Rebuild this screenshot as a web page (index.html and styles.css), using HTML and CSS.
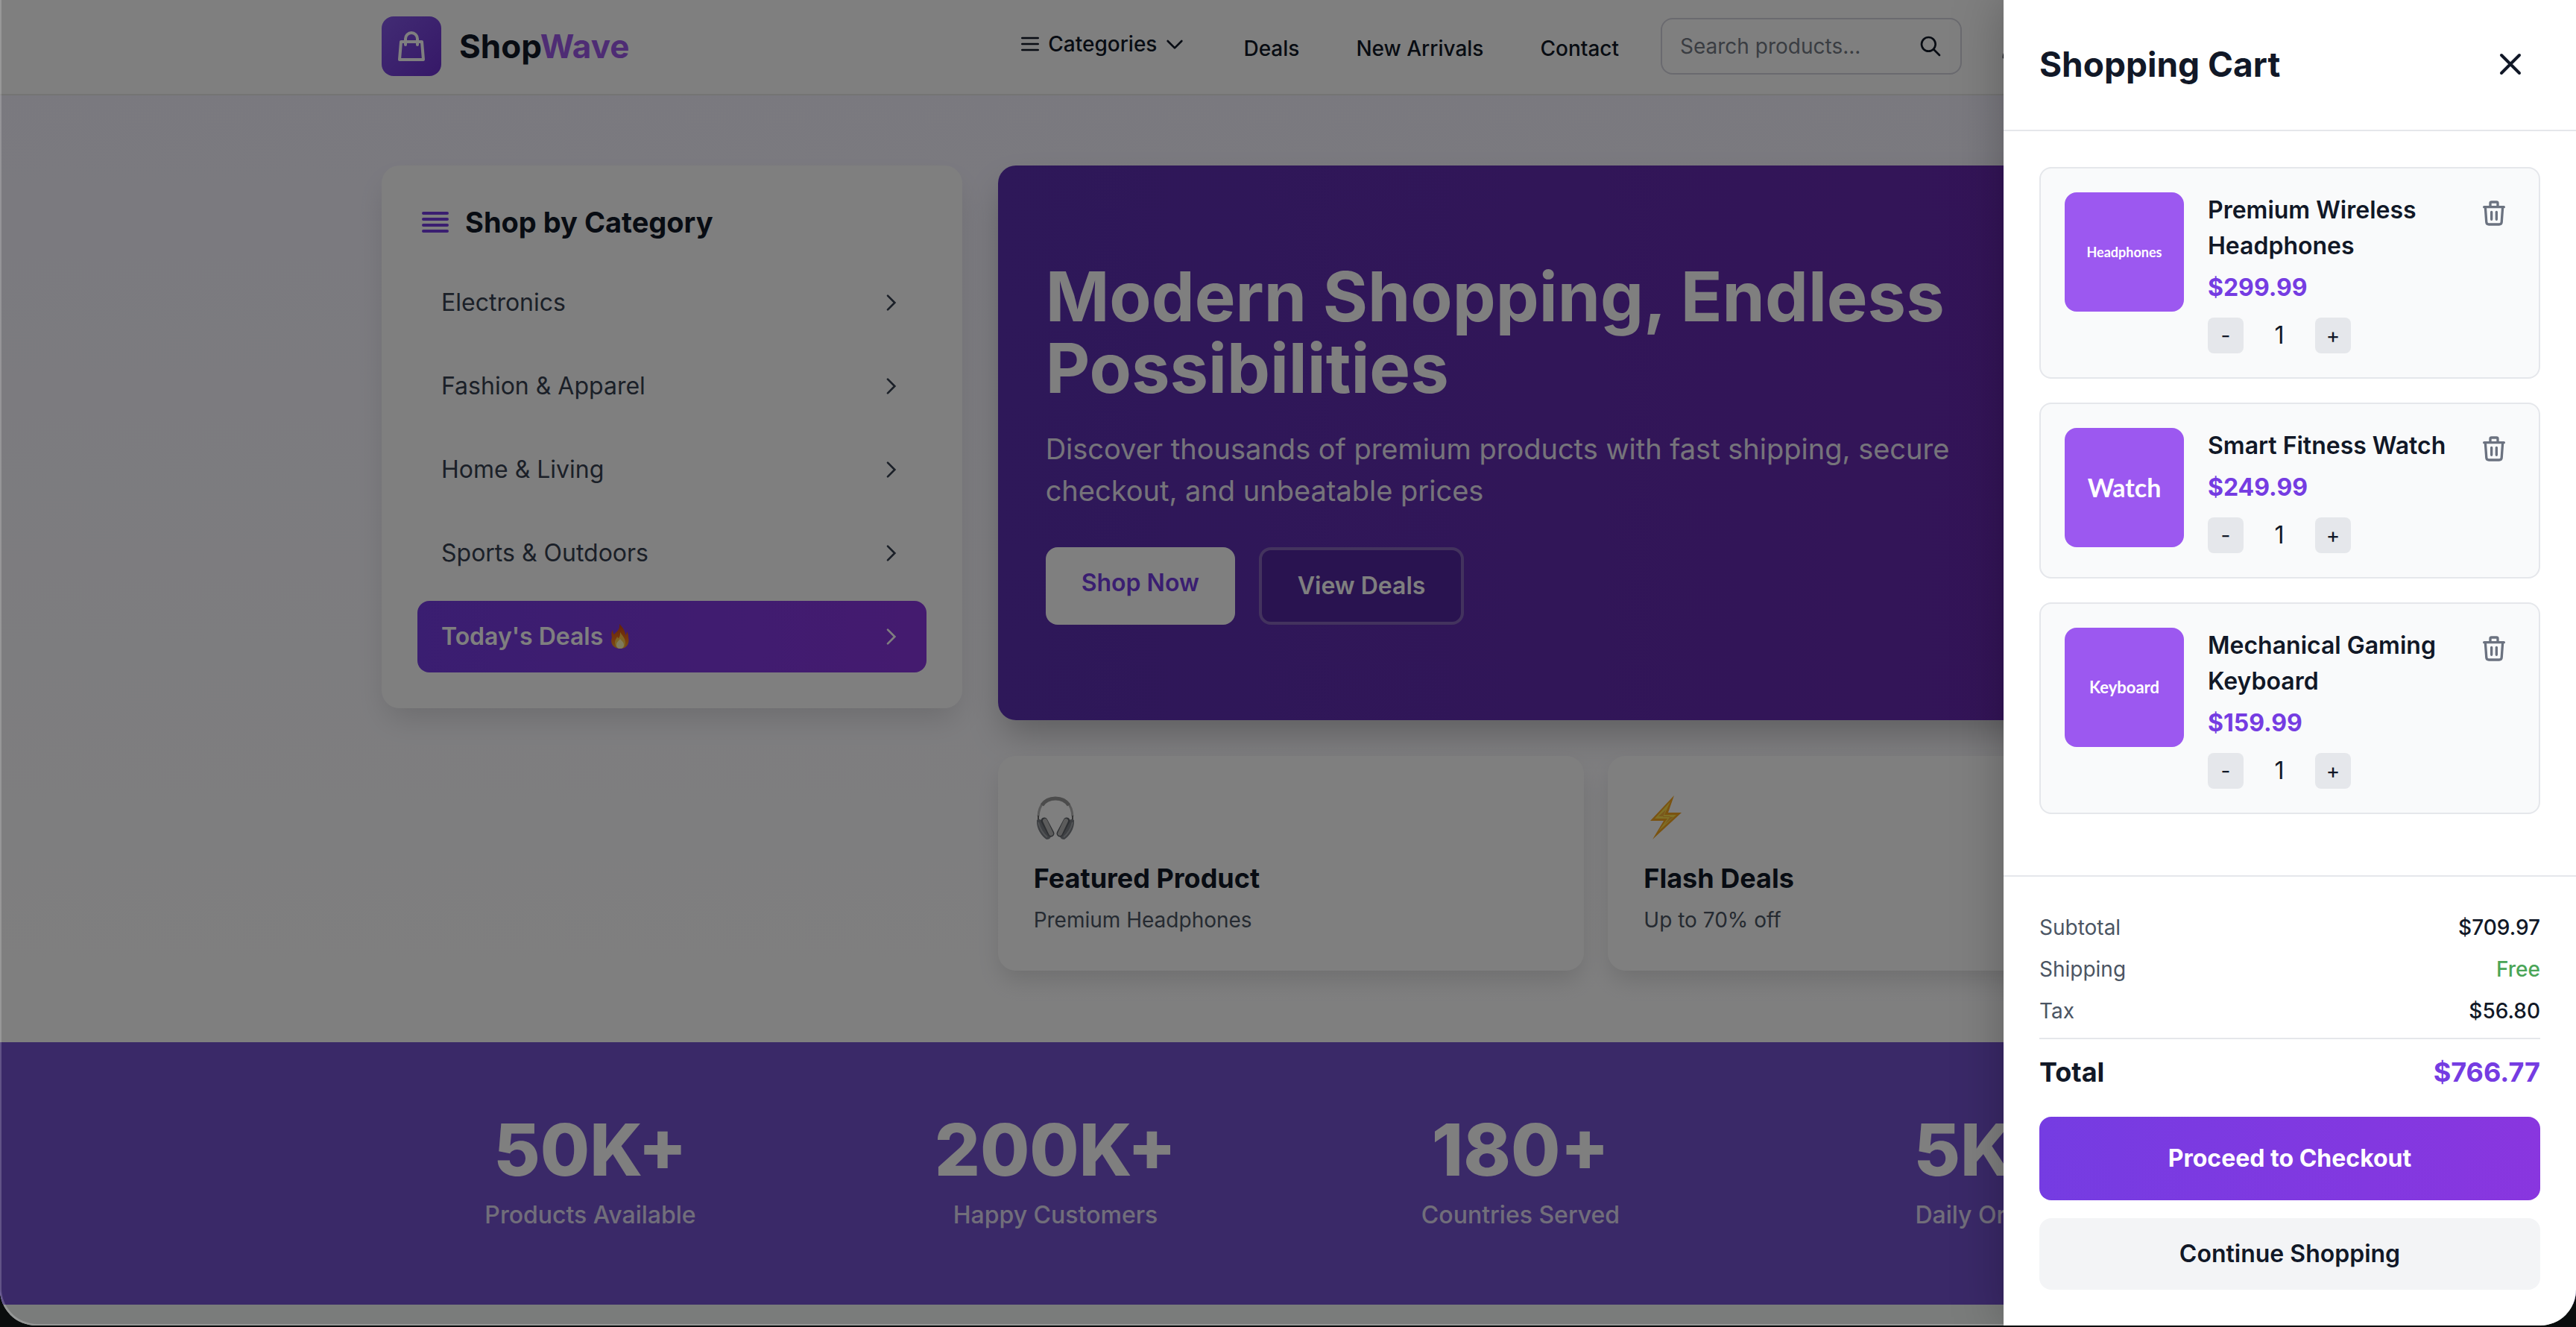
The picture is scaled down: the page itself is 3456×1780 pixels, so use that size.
FILE: index.html
```
<!DOCTYPE html>
<html lang="en">
  <head>
    <meta charset="utf-8" />
    <title>ShopWave</title>
    <meta name="viewport" content="width=device-width, initial-scale=1" />
    <link rel="stylesheet" href="styles.css">
  </head>

  <body>
    <div class="window">
      <div class="page">
        <header class="header">
          <div class="container header-row">
            <a href="#" class="logo">
              <span class="logo-icon">
                <svg width="48" height="48" viewBox="0 0 24 24" fill="none" stroke="currentColor" stroke-width="2" stroke-linecap="round" stroke-linejoin="round">
                  <path d="M16 11V7a4 4 0 00-8 0v4M5 9h14l1 12H4L5 9z" />
                </svg>
              </span>
              <span class="logo-text">Shop<span>Wave</span></span>
            </a>
            <nav class="nav">
              <button class="nav-menu">
                <svg width="32" height="32" viewBox="0 0 24 24" fill="none" stroke="currentColor" stroke-width="2" stroke-linecap="round"><path d="M4 6h16M4 12h16M4 18h16" /></svg>
                Categories
                <svg width="32" height="32" viewBox="0 0 24 24" fill="none" stroke="currentColor" stroke-width="2" stroke-linecap="round" stroke-linejoin="round"><path d="M19 9l-7 7-7-7" /></svg>
              </button>
              <a href="#">Deals</a>
              <a href="#">New Arrivals</a>
              <a href="#">Contact</a>
            </nav>
            <form class="search">
              <input type="text" placeholder="Search products..." aria-label="Search products" />
              <button type="button" aria-label="Search">
                <svg width="32" height="32" viewBox="0 0 24 24" fill="none" stroke="currentColor" stroke-width="2" stroke-linecap="round"><path d="M21 21l-6-6m2-5a7 7 0 11-14 0 7 7 0 0114 0z" /></svg>
              </button>
            </form>
            <div class="actions">
              <button aria-label="Account">
                <svg width="40" height="40" viewBox="0 0 24 24" fill="none" stroke="currentColor" stroke-width="2" stroke-linejoin="round"><path d="M16 7a4 4 0 11-8 0 4 4 0 018 0zM12 14a7 7 0 00-7 7h14a7 7 0 00-7-7z" /></svg>
              </button>
              <button aria-label="Wishlist">
                <svg width="40" height="40" viewBox="0 0 24 24" fill="none" stroke="currentColor" stroke-width="2"><path d="M12 20l-8-8a4.500 4.500 0 018-5 4.500 4.500 0 018 5z" /></svg>
              </button>
              <button aria-label="Cart">
                <svg width="40" height="40" viewBox="0 0 24 24" fill="none" stroke="currentColor" stroke-width="2"><path d="M3 3h2l3 11h10l3-8H6" /></svg>
              </button>
            </div>
          </div>
        </header>

        <section class="top">
          <div class="container top-grid">
            <aside class="sidebar">
              <h2>
                <svg width="48" height="48" viewBox="0 0 24 24" fill="none" stroke="currentColor" stroke-width="2" stroke-linecap="round"><path d="M4 6h16M4 10h16M4 14h16M4 18h16" /></svg>
                Shop by Category
              </h2>
              <a href="#">Electronics <svg class="chev" viewBox="0 0 24 24"><path d="M9 5l7 7-7 7" /></svg></a>
              <a href="#">Fashion &amp; Apparel <svg class="chev" viewBox="0 0 24 24"><path d="M9 5l7 7-7 7" /></svg></a>
              <a href="#">Home &amp; Living <svg class="chev" viewBox="0 0 24 24"><path d="M9 5l7 7-7 7" /></svg></a>
              <a href="#">Sports &amp; Outdoors <svg class="chev" viewBox="0 0 24 24"><path d="M9 5l7 7-7 7" /></svg></a>
              <a href="#" class="active">
                <span class="deal">Today's Deals
                  <svg width="26" height="34" viewBox="0 0 26 34">
                    <defs>
                      <linearGradient id="fire" x1="0" y1="0" x2="0" y2="1">
                        <stop offset="0" stop-color="#c8430f" />
                        <stop offset="0.6" stop-color="#f0701c" />
                        <stop offset="1" stop-color="#f5a52a" />
                      </linearGradient>
                    </defs>
                    <path fill="url(#fire)" d="M12 0c4 4 8 9 8 15 1-1 2-3 2-5 2 3 2 6 2 8 2 8-2 15-11 15S-1 26 2 18C1 14 1 11 3 8c0 3 1 5 2 6 4-4 8-7 7-14z" />
                    <path fill="#fbc64a" d="M13 11c3 5 7 8 7 14 0 5-3 8-7 8s-7-3-7-8c0-4 2-5 3-8 1 1 1 2 2 2 2-2 2-5 2-8z" />
                    <path fill="#fff6b8" d="M13 20c2 3 5 4 5 8 0 3-2 5-5 5s-5-2-5-5c0-4 3-5 5-8z" />
                  </svg>
                </span>
                <svg class="chev" viewBox="0 0 24 24"><path d="M9 5l7 7-7 7" /></svg>
              </a>
            </aside>

            <div class="main">
              <div class="hero">
                <h1>Modern Shopping, Endless Possibilities</h1>
                <p>Discover thousands of premium products with fast shipping, secure checkout, and unbeatable prices</p>
                <div class="hero-buttons">
                  <a href="#" class="btn-light">Shop Now</a>
                  <a href="#" class="btn-outline">View Deals</a>
                </div>
              </div>
              <div class="features">
                <div class="feature">
                  <svg width="60" height="72" viewBox="0 0 60 72" fill="none">
                    <path d="M6 33C7 17 15 9 29 9s22 8 23 24" stroke="#b2b2b2" stroke-width="3" />
                    <path d="M11 18c4-6 10-9 18-9s14 3 18 9" stroke="#989898" stroke-width="5" />
                    <path d="M6 32v6M52 32v6" stroke="#6c6c6c" stroke-width="2" />
                    <path d="M4 38c3-2 7-1 9 4l10 18c-1 3-3 4-6 4C11 60 3 50 4 38zM54 38c-3-2-7-1-9 4L35 60c1 3 3 4 6 4 6-4 14-14 13-26z" fill="#7c8086" />
                    <path d="M6 41c2 8 6 15 12 20M52 41c-2 8-6 15-12 20" stroke="#a4a8ac" stroke-width="2" />
                    <path d="M14 39l9 17M44 39l-9 17" stroke="#5c6066" stroke-width="9" stroke-linecap="round" />
                    <path d="M15 39l8 17M43 39l-8 17" stroke="#b8b8b8" stroke-width="6" stroke-linecap="round" />
                  </svg>
                  <h3>Featured Product</h3>
                  <p>Premium Headphones</p>
                </div>
                <div class="feature">
                  <svg width="60" height="72" viewBox="0 0 60 72">
                    <path fill="#f5a623" d="M41 5L9 39h18L12 64l39-36H33z" />
                    <path fill="#ffe14d" d="M36 13L15 36h17L20 53l24-22H28z" />
                    <path fill="#f2b03a" d="M30 24L20 33h16l-8 11 12-10H26z" />
                  </svg>
                  <h3>Flash Deals</h3>
                  <p>Up to 70% off</p>
                </div>
              </div>
            </div>
          </div>
        </section>

        <section class="stats">
          <div class="container stats-grid">
            <div><strong>50K+</strong><span>Products Available</span></div>
            <div><strong>200K+</strong><span>Happy Customers</span></div>
            <div><strong>180+</strong><span>Countries Served</span></div>
            <div><strong>5K+</strong><span>Daily Orders</span></div>
          </div>
        </section>
      </div>

      <div class="overlay"></div>

      <aside class="drawer">
        <div class="drawer-head">
          <h2>Shopping Cart</h2>
          <button aria-label="Close">
            <svg width="48" height="48" viewBox="0 0 24 24" fill="none" stroke="currentColor" stroke-width="2" stroke-linecap="round"><path d="M6 18L18 6M6 6l12 12" /></svg>
          </button>
        </div>

        <div class="items">
          <div class="item">
            <div class="thumb thumb-sm">Headphones</div>
            <div class="item-info">
              <h3>Premium Wireless Headphones</h3>
              <div class="price">$299.99</div>
              <div class="qty"><button>-</button><span>1</span><button>+</button></div>
            </div>
            <button class="remove" aria-label="Remove Premium Wireless Headphones">
              <svg viewBox="0 0 24 24"><path d="M19 7l-.867 12.142A2 2 0 0116.138 21H7.862a2 2 0 01-1.995-1.858L5 7m5 4v6m4-6v6m1-10V4a1 1 0 00-1-1h-4a1 1 0 00-1 1v3M4 7h16" /></svg>
            </button>
          </div>
          <div class="item">
            <div class="thumb thumb-lg">Watch</div>
            <div class="item-info">
              <h3>Smart Fitness Watch</h3>
              <div class="price">$249.99</div>
              <div class="qty"><button>-</button><span>1</span><button>+</button></div>
            </div>
            <button class="remove" aria-label="Remove Smart Fitness Watch">
              <svg viewBox="0 0 24 24"><path d="M19 7l-.867 12.142A2 2 0 0116.138 21H7.862a2 2 0 01-1.995-1.858L5 7m5 4v6m4-6v6m1-10V4a1 1 0 00-1-1h-4a1 1 0 00-1 1v3M4 7h16" /></svg>
            </button>
          </div>
          <div class="item">
            <div class="thumb">Keyboard</div>
            <div class="item-info">
              <h3>Mechanical Gaming Keyboard</h3>
              <div class="price">$159.99</div>
              <div class="qty"><button>-</button><span>1</span><button>+</button></div>
            </div>
            <button class="remove" aria-label="Remove Mechanical Gaming Keyboard">
              <svg viewBox="0 0 24 24"><path d="M19 7l-.867 12.142A2 2 0 0116.138 21H7.862a2 2 0 01-1.995-1.858L5 7m5 4v6m4-6v6m1-10V4a1 1 0 00-1-1h-4a1 1 0 00-1 1v3M4 7h16" /></svg>
            </button>
          </div>
        </div>

        <div class="summary">
          <div class="row"><span>Subtotal</span><b>$709.97</b></div>
          <div class="row"><span>Shipping</span><b class="free">Free</b></div>
          <div class="row"><span>Tax</span><b>$56.80</b></div>
          <div class="total"><span>Total</span><b>$766.77</b></div>
          <button class="checkout">Proceed to Checkout</button>
          <button class="continue">Continue Shopping</button>
        </div>
      </aside>
    </div>
  </body>
</html>
```
FILE: styles.css
```
* {
  box-sizing: border-box;
}
body {
  margin: 0;
  background: #0a0d0d;
  color: #111827;
  font-family: Inter, "Liberation Sans", sans-serif;
  font-size: 32px;
  line-height: 48px;
}
h1, h2, h3, p {
  margin: 0;
}
a {
  color: inherit;
  text-decoration: none;
}
button, input {
  font: inherit;
  color: inherit;
  background: none;
  border: none;
  padding: 0;
}
svg {
  display: block;
  flex-shrink: 0;
}

/* rounded bottom corners of the app window */
.window {
  position: relative;
  height: calc(100vh - 2px);
  overflow: hidden;
  border-radius: 0 0 48px 48px;
  background: #f4f8f6;
}
.page {
  margin-top: -2px;
}
.container {
  max-width: 2560px;
  margin: 0 auto;
  padding: 0 64px;
}

/* header */
.header {
  background: #fff;
  padding: 24px 0;
  box-shadow: 0 2px 0 #e8e8e8;
  position: relative;
}
.header-row {
  display: flex;
  align-items: center;
}
.logo {
  display: flex;
  align-items: center;
  gap: 24px;
}
.logo-icon {
  width: 80px;
  height: 80px;
  border-radius: 16px;
  background: linear-gradient(135deg, #8458e8, #6c30d0);
  color: #fff;
  display: flex;
  align-items: center;
  justify-content: center;
}
.logo-text {
  font-size: 44px;
  font-weight: 700;
}
.logo-text span {
  color: #9c58e8;
}
.nav {
  display: flex;
  align-items: center;
  gap: 76px;
  margin-left: auto;
  margin-right: 56px;
  font-size: 28px;
  font-weight: 500;
}
.nav a {
  padding-top: 6px;
}
.nav-menu {
  display: flex;
  align-items: center;
  gap: 8px;
  padding-bottom: 6px;
}
.search {
  display: flex;
  align-items: center;
  width: 404px;
  height: 76px;
  padding: 0 24px;
  border: 2px solid #d5d5de;
  border-radius: 16px;
}
.search input {
  flex: 1;
  min-width: 0;
  font-size: 28px;
}
.search input::placeholder {
  color: #757a85;
}
.actions {
  display: flex;
  gap: 32px;
  margin-left: 32px;
}
.actions button {
  padding: 16px;
}

/* categories + hero */
.top {
  padding: 96px 0;
  background: linear-gradient(#f5f3ff, #fff);
}
.top-grid {
  display: grid;
  grid-template-columns: repeat(3, 1fr);
  gap: 48px;
  align-items: start;
}
.sidebar {
  display: flex;
  flex-direction: column;
  gap: 16px;
  padding: 48px;
  border-radius: 24px;
  background: #fff;
  box-shadow: 0 20px 40px -8px rgba(0, 0, 0, 0.14);
}
.sidebar h2 {
  display: flex;
  align-items: center;
  gap: 16px;
  margin-bottom: 16px;
  font-size: 38px;
  line-height: 56px;
}
.sidebar h2 svg {
  color: #753ce2;
}
.sidebar a {
  display: flex;
  align-items: center;
  justify-content: space-between;
  padding: 24px 32px;
  border-radius: 16px;
  color: #374151;
}
.sidebar .active {
  color: #fff;
  font-weight: 600;
  background: linear-gradient(90deg, #753ce2, #8936df);
}
.deal {
  display: flex;
  align-items: center;
  gap: 10px;
}
.chev {
  width: 32px;
  height: 32px;
  fill: none;
  stroke: currentColor;
  stroke-width: 2;
  stroke-linecap: round;
}
.main {
  grid-column: span 2;
}
.hero {
  padding: 128px 64px;
  border-radius: 24px;
  color: #fff;
  background: linear-gradient(90deg, #5c30b2, #6a28b0);
  box-shadow: 0 24px 48px -8px rgba(0, 0, 0, 0.25);
}
.hero h1 {
  max-width: 1280px;
  font-size: 92px;
  line-height: 96px;
  font-weight: 700;
}
.hero p {
  max-width: 1280px;
  margin: 32px 0 48px;
  font-size: 38px;
  line-height: 56px;
  color: #ece8f5;
}
.hero-buttons {
  display: flex;
  gap: 32px;
  font-weight: 600;
}
.btn-light {
  padding: 24px 48px;
  border-radius: 16px;
  background: #fff;
  color: #753ce2;
}
.btn-outline {
  padding: 24px 48px;
  border: 4px solid #8766bc;
  border-radius: 16px;
  background: #5226a0;
}
.features {
  display: grid;
  grid-template-columns: 1fr 1fr;
  gap: 32px;
  margin-top: 48px;
}
.feature {
  padding: 48px;
  border-radius: 24px;
  background: #fff;
  box-shadow: 0 16px 32px -4px rgba(0, 0, 0, 0.13);
}
.feature h3 {
  margin: 16px 0 8px;
  font-size: 36px;
  line-height: 56px;
}
.feature p {
  font-size: 28px;
  line-height: 40px;
  color: #4b5563;
}

/* stats */
.stats {
  padding: 96px 0;
  background: #7452d0;
}
.stats-grid {
  display: grid;
  grid-template-columns: repeat(4, 1fr);
  gap: 64px;
  color: #fff;
  text-align: center;
}
.stats strong {
  display: block;
  margin-bottom: 16px;
  font-size: 96px;
  line-height: 96px;
  font-weight: 800;
}
.stats span {
  display: block;
  font-weight: 500;
  opacity: 0.8;
}

.overlay {
  position: absolute;
  inset: 0;
  background: rgba(0, 0, 0, 0.5);
  border-radius: 0 0 48px 48px;
  box-shadow: inset 2px -2px 0 rgba(255, 255, 255, 0.2);
}

/* cart drawer */
.drawer {
  position: absolute;
  top: -2px;
  right: 0;
  bottom: 0;
  width: 768px;
  display: flex;
  flex-direction: column;
  background: #fff;
  box-shadow: 0 0 64px rgba(0, 0, 0, 0.25);
}
.drawer-head {
  display: flex;
  align-items: center;
  justify-content: space-between;
  padding: 48px;
  border-bottom: 2px solid #e5e7eb;
}
.drawer-head h2 {
  font-size: 46px;
}
.drawer-head button {
  padding: 16px;
}
.items {
  flex: 1;
  display: flex;
  flex-direction: column;
  gap: 32px;
  padding: 48px;
}
.item {
  display: flex;
  align-items: flex-start;
  gap: 32px;
  padding: 32px;
  border: 2px solid #e5e7eb;
  border-radius: 16px;
  background: #f9fafb;
}
.thumb {
  width: 160px;
  height: 160px;
  flex-shrink: 0;
  border-radius: 16px;
  background: #9c58f0;
  color: #fff;
  font-family: Lato, sans-serif;
  font-size: 22px;
  font-weight: 700;
  display: flex;
  align-items: center;
  justify-content: center;
}
.thumb-sm {
  font-size: 18px;
}
.thumb-lg {
  font-size: 34px;
}
.item-info {
  flex: 1;
}
.item h3 {
  font-size: 32px;
  font-weight: 600;
}
.price {
  margin: 8px 0 16px;
  font-weight: 700;
  color: #753ce2;
}
.qty {
  display: flex;
}
.qty button {
  width: 48px;
  height: 48px;
  border-radius: 8px;
  background: #e5e7eb;
  font-size: 28px;
}
.qty span {
  width: 96px;
  text-align: center;
}
.remove {
  padding: 8px;
  color: #6b7280;
}
.remove svg {
  width: 40px;
  height: 40px;
  fill: none;
  stroke: currentColor;
  stroke-width: 2;
  stroke-linecap: round;
  stroke-linejoin: round;
}
.summary {
  padding: 48px;
  border-top: 2px solid #e5e7eb;
}
.row {
  display: flex;
  justify-content: space-between;
  margin-bottom: 16px;
  font-size: 28px;
  line-height: 40px;
  color: #4b5563;
}
.row b {
  font-weight: 500;
  color: #111827;
}
.row .free {
  color: #4aa557;
}
.total {
  display: flex;
  justify-content: space-between;
  padding-top: 16px;
  margin-bottom: 32px;
  border-top: 2px solid #e5e7eb;
  font-size: 36px;
  line-height: 56px;
  font-weight: 700;
}
.total b {
  font-weight: 700;
  color: #753ce2;
}
.checkout, .continue {
  display: block;
  width: 100%;
  border-radius: 16px;
}
.checkout {
  padding: 32px;
  margin-bottom: 24px;
  color: #fff;
  font-weight: 700;
  background: linear-gradient(90deg, #753ce2, #8936df);
}
.continue {
  padding: 24px;
  font-weight: 600;
  background: #f3f4f6;
}
```
